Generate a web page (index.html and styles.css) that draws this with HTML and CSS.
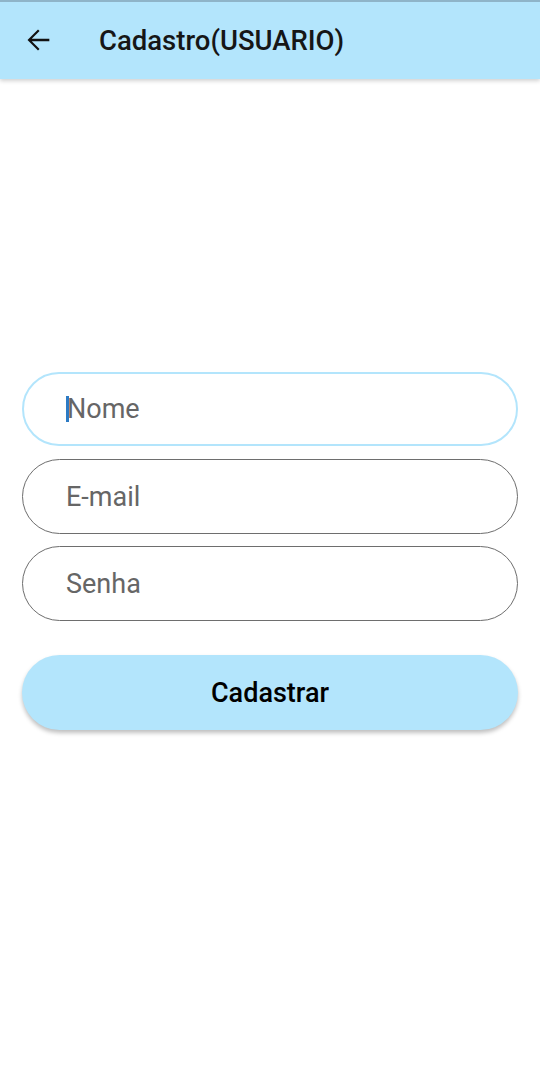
FILE: index.html
```html
<!DOCTYPE html>
<html lang="pt">
<head>
<meta charset="utf-8">
<link rel="stylesheet" href="styles.css">
</head>
<body>
<header class="appbar">
  <svg class="back" width="34" height="34" viewBox="0 0 24 24"><path d="M20 11.2H7.6l5.5-5.5L12 4.6 4.6 12l7.4 7.4 1.1-1.1-5.5-5.5H20v-1.6z" fill="#111"/></svg>
  <h1 class="title">Cadastro(USUARIO)</h1>
</header>
<main class="form">
  <div class="field focused"><span class="caret"></span><span class="ph">Nome</span></div>
  <div class="field"><span class="ph">E-mail</span></div>
  <div class="field"><span class="ph">Senha</span></div>
  <button class="btn">Cadastrar</button>
</main>
</body>
</html>
```
FILE: styles.css
```css
* { box-sizing: border-box; }
html, body { margin: 0; padding: 0; background: #fff; }
body { font-family: Roboto, "Noto Sans", sans-serif; width: 540px; height: 1069px; overflow: hidden; }
.appbar {
  height: 79px;
  background: #b3e5fc;
  border-top: 2px solid #8fb4c8;
  display: flex;
  align-items: center;
  padding-left: 21px;
  box-shadow: 0 2px 4px rgba(0,0,0,0.18);
  position: relative;
}
.back { display: block; margin-top: -1px; }
.title {
  margin: 0 0 0 44px;
  font-size: 27.5px;
  font-weight: 500;
  color: #161616;
}
.form {
  padding: 293px 22px 0 22px;
  display: flex;
  flex-direction: column;
}
.field {
  height: 75px;
  border: 1.3px solid #6e6e6e;
  border-radius: 38px;
  display: flex;
  align-items: center;
  padding-left: 43px;
  margin-bottom: 12px;
  position: relative;
}
.field.focused { border: 2px solid #b3e5fc; height: 74px; margin-bottom: 13px; }
.ph { font-size: 27px; color: #666; margin-top: 0; }
.caret {
  position: absolute;
  left: 42px;
  top: 22px;
  width: 3px;
  height: 26px;
  background: #2d7bc4;
}
.btn {
  margin-top: 22px;
  height: 75px;
  border: none;
  border-radius: 38px;
  background: #b3e5fc;
  font-family: Roboto, sans-serif;
  font-size: 27px;
  font-weight: 500;
  color: #000;
  box-shadow: 0 3px 4px rgba(0,0,0,0.25);
}
```
